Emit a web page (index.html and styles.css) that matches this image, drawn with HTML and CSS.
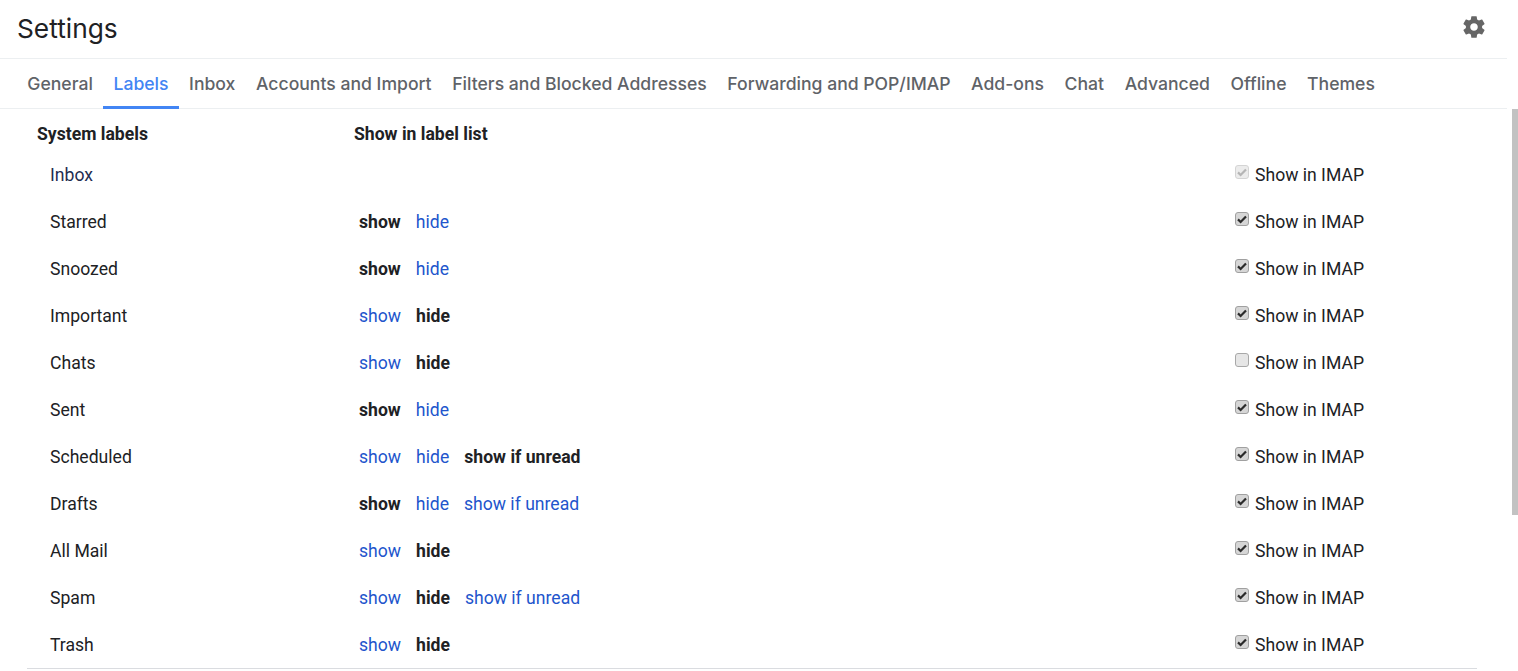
FILE: index.html
```html
<!DOCTYPE html>
<html lang="en">
<head>
  <meta charset="UTF-8" />
  <title>Settings</title>
  <link rel="stylesheet" href="styles.css">
</head>
<body>
<div class="scroll-thumb"></div>
<div class="page">
  <header class="top-bar">
    <h1>Settings</h1>
    <svg class="gear" viewBox="0 0 24 24"><path d="M19.43 12.98c.04-.32.07-.64.07-.98s-.03-.66-.07-.98l2.11-1.65c.19-.15.24-.42.12-.64l-2-3.46c-.12-.22-.39-.3-.61-.22l-2.49 1c-.52-.4-1.08-.73-1.69-.98l-.38-2.65A.488.488 0 0 0 14 2h-4c-.25 0-.46.18-.49.42l-.38 2.65c-.61.25-1.17.59-1.69.98l-2.49-1c-.23-.09-.49 0-.61.22l-2 3.46c-.13.22-.07.49.12.64l2.11 1.65c-.04.32-.07.65-.07.98s.03.66.07.98l-2.11 1.65c-.19.15-.24.42-.12.64l2 3.46c.12.22.39.3.61.22l2.49-1c.52.4 1.08.73 1.69.98l.38 2.65c.03.24.24.42.49.42h4c.25 0 .46-.18.49-.42l.38-2.65c.61-.25 1.17-.59 1.69-.98l2.49 1c.23.09.49 0 .61-.22l2-3.46c.12-.22.07-.49-.12-.64l-2.11-1.65zM12 15.5c-1.93 0-3.5-1.57-3.5-3.5s1.57-3.5 3.5-3.5 3.5 1.57 3.5 3.5-1.57 3.5-3.5 3.5z"/></svg>
  </header>

  <nav class="tabs">
    <a>General</a>
    <a class="active">Labels</a>
    <a>Inbox</a>
    <a>Accounts and Import</a>
    <a>Filters and Blocked Addresses</a>
    <a>Forwarding and POP/IMAP</a>
    <a>Add-ons</a>
    <a>Chat</a>
    <a>Advanced</a>
    <a>Offline</a>
    <a>Themes</a>
  </nav>

  <div class="labels">
    <div class="heading-row">
      <span class="heading-name">System labels</span>
      <span>Show in label list</span>
    </div>
    <div id="rows"></div>
  </div>
</div>
<script src="rows.js"></script>
</body>
</html>
```

FILE: styles.css
```css
html, body {
  height: 100%;
  overflow: hidden;
}
body {
  margin: 0;
  background: #fff;
  color: #202124;
  font-family: Roboto, Arial, sans-serif;
  font-size: 17.6px;
}
.page {
  width: 1507px;
}
.scroll-thumb {
  position: absolute;
  top: 109px;
  right: 0;
  width: 6px;
  height: 406px;
  background: #c2c2c2;
}
.top-bar {
  display: flex;
  justify-content: space-between;
  align-items: center;
  height: 59px;
  padding: 0 20px 0 17px;
  box-sizing: border-box;
  border-bottom: 1px solid #eceff1;
}
h1 {
  margin: 0 0 2px;
  font-family: Inter, Arial, sans-serif;
  font-size: 26.3px;
  font-weight: 400;
  color: #202124;
}
.gear {
  width: 26px;
  height: 26px;
  margin-top: -5px;
  fill: #666;
}
.tabs {
  display: flex;
  height: 50px;
  padding-left: 17px;
  border-bottom: 1px solid #eceff1;
  box-sizing: border-box;
}
.tabs a {
  padding: 0 10.3px;
  line-height: 50px;
  font-family: Inter, Arial, sans-serif;
  font-size: 17.6px;
  font-weight: 500;
  color: #5f6368;
  height: 50px;
  box-sizing: border-box;
}
.tabs a.active {
  color: #4285f4;
  border-bottom: 3px solid #4285f4;
}
.labels {
  width: 1450px;
  margin-left: 27px;
  border-bottom: 1px solid #dadce0;
}
.heading-row {
  display: flex;
  height: 42px;
  padding: 8px 0 0 10px;
  align-items: center;
  font-weight: 700;
  box-sizing: border-box;
}
.heading-name {
  width: 317px;
}
.label-row {
  display: flex;
  align-items: center;
  height: 47px;
  padding-left: 23px;
}
.label-name {
  width: 309px;
}
.inbox-name {
  color: #1f2d50;
}
.actions {
  display: flex;
  gap: 15px;
  width: 876px;
}
.actions a {
  color: #2255cc;
}
.actions b {
  font-weight: 700;
}
.imap {
  display: flex;
  align-items: center;
  gap: 6px;
}
.box {
  width: 14px;
  height: 14px;
  margin-top: -6px;
}
```

FILE: rows.js
```js
const rows = [
  { name: 'Inbox', imap: 'locked' },
  { name: 'Starred', state: 'show', imap: 'on' },
  { name: 'Snoozed', state: 'show', imap: 'on' },
  { name: 'Important', state: 'hide', imap: 'on' },
  { name: 'Chats', state: 'hide', imap: 'off' },
  { name: 'Sent', state: 'show', imap: 'on' },
  { name: 'Scheduled', state: 'show if unread', unread: true, imap: 'on' },
  { name: 'Drafts', state: 'show', unread: true, imap: 'on' },
  { name: 'All Mail', state: 'hide', imap: 'on' },
  { name: 'Spam', state: 'hide', unread: true, imap: 'on' },
  { name: 'Trash', state: 'hide', imap: 'on' },
];

function action(text, state) {
  return text === state ? `<b>${text}</b>` : `<a>${text}</a>`;
}

function checkbox(kind) {
  const colors = {
    locked: ['#ececec', '#d4d4d4', '#b5b5b5'],
    on: ['#d6d6d6', '#a0a0a0', '#2b2b2b'],
    off: ['#e6e6e6', '#a8a8a8', 'none'],
  }[kind];
  return `<svg class="box" viewBox="0 0 14 14">
    <rect x=".5" y=".5" width="13" height="13" rx="2.5" fill="${colors[0]}" stroke="${colors[1]}"/>
    <path d="M3 7.4l2.6 2.6L11 4.4" fill="none" stroke="${colors[2]}" stroke-width="2.2"/>
  </svg>`;
}

document.getElementById('rows').innerHTML = rows.map(row => {
  let links = '';
  if (row.state) {
    links = action('show', row.state) + action('hide', row.state);
    if (row.unread) links += action('show if unread', row.state);
  }
  return `<div class="label-row">
    <span class="label-name${row.name === 'Inbox' ? ' inbox-name' : ''}">${row.name}</span>
    <span class="actions">${links}</span>
    <label class="imap">${checkbox(row.imap)}Show in IMAP</label>
  </div>`;
}).join('');
```
